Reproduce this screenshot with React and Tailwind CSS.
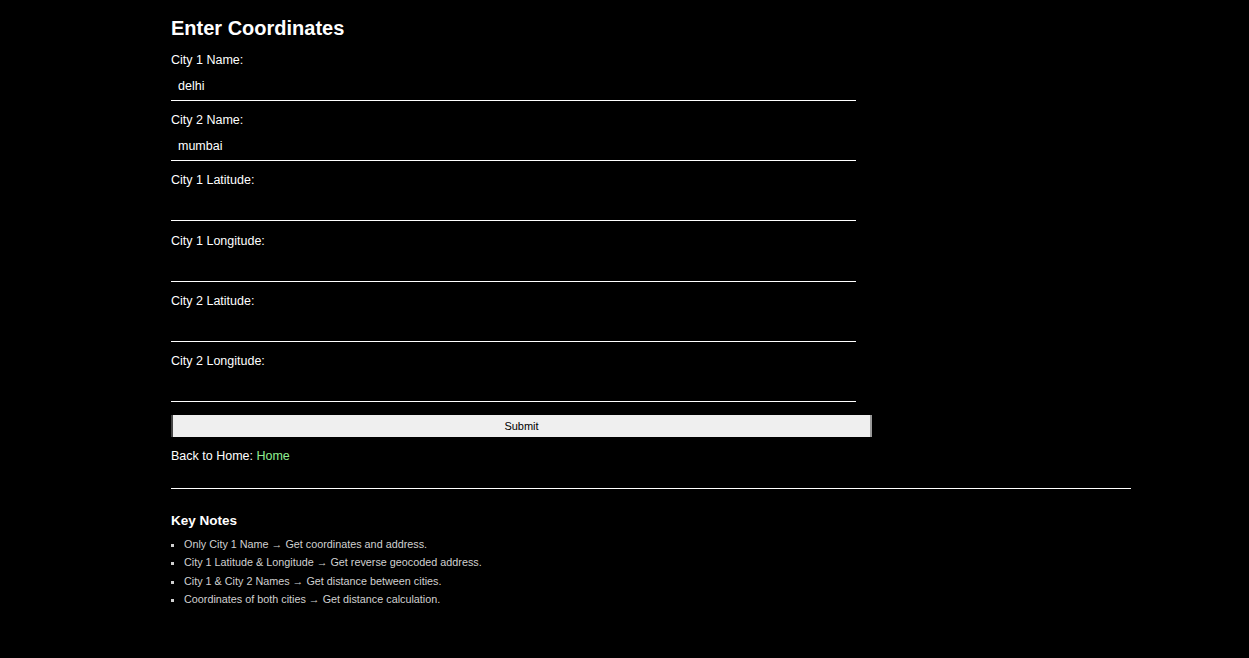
import { useState } from 'react';

const fields = [
  { name: 'city1', label: 'City 1 Name:', value: 'delhi' },
  { name: 'city2', label: 'City 2 Name:', value: 'mumbai' },
  { name: 'lat1', label: 'City 1 Latitude:', value: '' },
  { name: 'lon1', label: 'City 1 Longitude:', value: '' },
  { name: 'lat2', label: 'City 2 Latitude:', value: '' },
  { name: 'lon2', label: 'City 2 Longitude:', value: '' },
];

const notes = [
  'Only City 1 Name → Get coordinates and address.',
  'City 1 Latitude & Longitude → Get reverse geocoded address.',
  'City 1 & City 2 Names → Get distance between cities.',
  'Coordinates of both cities → Get distance calculation.',
];

export default function App() {
  const [form, setForm] = useState(
    Object.fromEntries(fields.map(f => [f.name, f.value]))
  );

  const handleChange = (name, value) => {
    setForm(prev => ({ ...prev, [name]: value }));
  };

  return (
    <div className="min-h-[658px] bg-black text-white font-['Liberation_Sans',Arial,sans-serif]">
      <div className="ml-[171px] w-[960px] pt-[17px]">
        <h2 className="text-[20px] leading-[22px] font-bold">Enter Coordinates</h2>

        <form onSubmit={e => e.preventDefault()} className="mt-[13px]">
          {fields.map(field => (
            <div key={field.name} className="mb-[11.2px]">
              <label className="block text-[12.5px] leading-[16px]">{field.label}</label>
              <input
                type="text"
                value={form[field.name]}
                onChange={e => handleChange(field.name, e.target.value)}
                className="mt-[3px] block w-[685px] h-[30px] px-[7px] bg-black text-white text-[12.5px] border-b border-white outline-none"
              />
            </div>
          ))}

          <button
            type="submit"
            className="mt-[13px] block w-[701px] h-[22px] bg-[#efefef] text-black text-[11px] border-l-2 border-r-2 border-l-[#444] border-r-[#999]"
          >
            Submit
          </button>
        </form>

        <p className="mt-[11px] text-[12.5px] leading-[16px]">
          Back to Home: <a href="#" className="text-[#90ee90]">Home</a>
        </p>

        <hr className="mt-[24px] border-0 border-t border-white" />

        <h3 className="mt-[24px] text-[13.5px] leading-[16px] font-bold">Key Notes</h3>
        <ul className="mt-[9px] list-[square] pl-[13px] text-[10.8px] leading-[13px] text-[#d0d0d0]">
          {notes.map(note => (
            <li key={note} className="mb-[5.3px]">{note}</li>
          ))}
        </ul>
      </div>
    </div>
  );
}
